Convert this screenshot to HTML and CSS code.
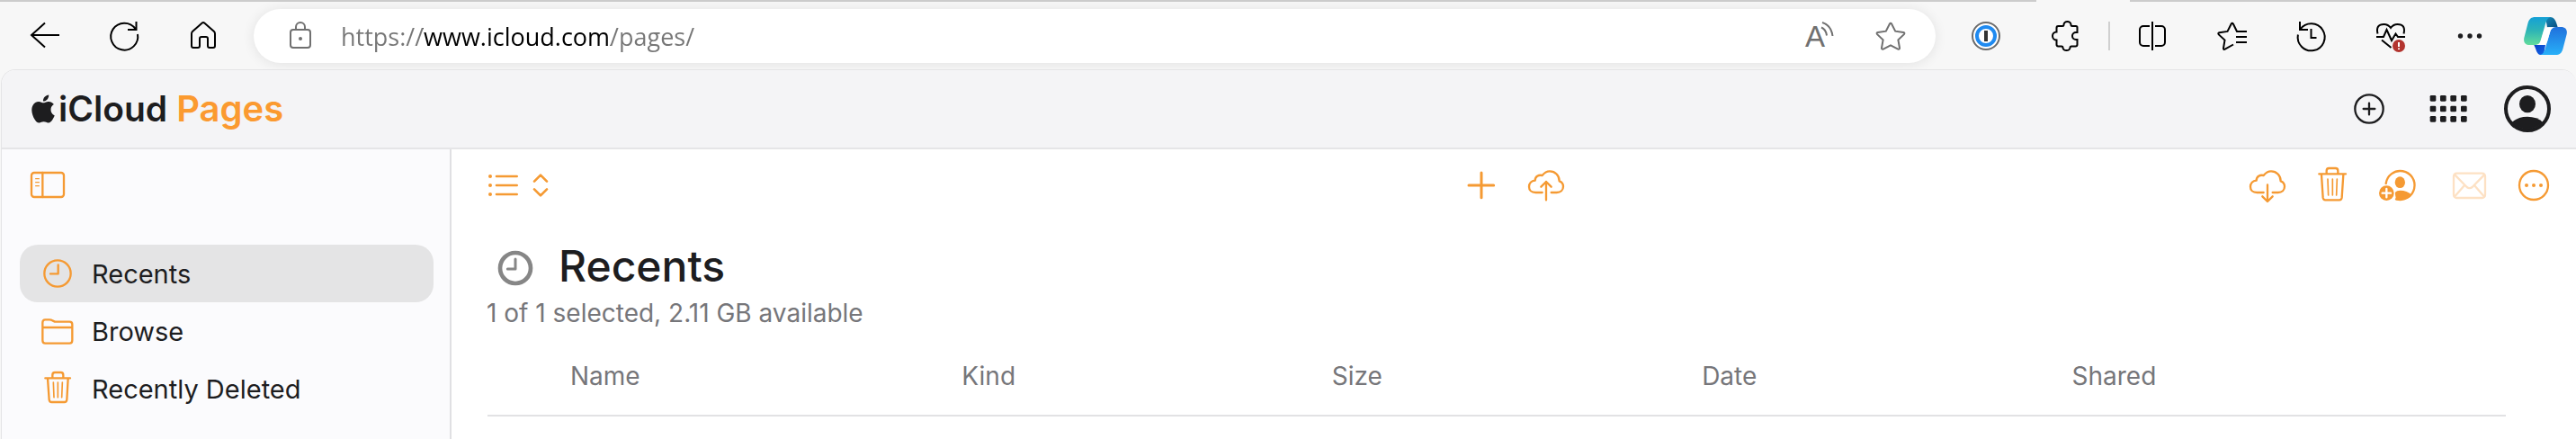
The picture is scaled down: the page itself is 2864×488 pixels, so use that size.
FILE: index.html
```html
<!DOCTYPE html>
<html lang="en">
<head>
<meta charset="utf-8">
<title>iCloud Pages</title>
<link rel="stylesheet" href="styles.css">
</head>
<body>
<div class="tab-edge"><span class="tab-edge-left"></span><span class="tab-edge-right"></span></div>
<header class="browser-bar">
  <button class="tool" aria-label="Back"><svg class="icon" viewBox="0 0 48 48"><path d="M40 23H9M24 9.500 9 23l15 13.500"/></svg></button>
  <button class="tool" aria-label="Reload"><svg class="icon" viewBox="0 0 48 48"><path d="M39 22A15 15 0 1 1 36.500 16M37.500 8v9H28"/></svg></button>
  <button class="tool" aria-label="Home"><svg class="icon" viewBox="0 0 48 48"><path d="M11 21.500q0-1.500 1-2.500L22.500 9.700q1.500-1.300 3 0L36 19q1 1 1 2.500V35a2 2 0 0 1-2 2h-4a2 2 0 0 1-2-2v-8a2 2 0 0 0-2-2h-5a2 2 0 0 0-2 2v8a2 2 0 0 1-2 2h-5a2 2 0 0 1-2-2z"/></svg></button>
  <div class="address">
    <button class="address-button" aria-label="Site information"><svg class="icon muted" viewBox="0 0 48 48"><rect x="13" y="17" width="22" height="20" rx="3"/><path d="M19 17v-3a5 5 0 0 1 10 0v3"/><circle class="solid" cx="24" cy="27" r="2"/></svg></button>
    <input class="url" type="text" aria-label="Address" value="https://www.icloud.com/pages/">
    <button class="address-button" aria-label="Read aloud"><svg class="icon muted" viewBox="0 0 48 48"><text class="aloud" x="8" y="36">A</text><path d="M27 9q10 3 11.500 15M26 14.500q5 2 6 9"/></svg></button>
    <button class="address-button star" aria-label="Add to favorites"><svg class="icon muted" viewBox="0 0 48 48"><path d="M22.800 10.700q1.200-2 2.400 0l4 8 9 1.300q2 .5.700 2.200l-6.500 6.200 1.600 8.800q.1 2-1.800 1.400L24 34.300l-8.200 4.300q-1.900.6-1.800-1.400l1.600-8.800-6.500-6.200q-1.300-1.700.7-2.200l9-1.300z"/></svg></button>
  </div>
  <button class="tool" aria-label="Password manager"><svg class="icon" viewBox="0 0 48 48"><circle cx="24" cy="24" r="15" fill="#fff" stroke="#6b6b6b"/><circle cx="24" cy="24" r="10" stroke="#1f8af0" stroke-width="4"/><path d="M24 18v12" stroke="#333" stroke-width="4"/></svg></button>
  <button class="tool" aria-label="Extensions"><svg class="icon" viewBox="0 0 48 48"><path d="M14.500 19.500V15a2 2 0 0 1 2-2h4.500q1.500 0 1.500-1.500a4 3.500 0 0 1 8 0q0 1.500 1.500 1.500h4a1.500 1.500 0 0 1 1.500 1.500V20H36a4 4 0 0 0 0 8h1.500v5.500a2 2 0 0 1-2 2H31q-1.500 0-1.500 1.500a4 3 0 0 1-8 0q0-1.500-1.500-1.500h-3.500a2 2 0 0 1-2-2v-5a4.500 4.500 0 0 1 0-9z"/></svg></button>
  <span class="divider"></span>
  <button class="tool" aria-label="Split screen"><svg class="icon" viewBox="0 0 48 48"><path d="M21 13h-7a4 4 0 0 0-4 4v14a4 4 0 0 0 4 4h7M27 13h7a4 4 0 0 1 4 4v14a4 4 0 0 1-4 4h-7M24 8v32"/></svg></button>
  <button class="tool" aria-label="Favorites"><svg class="icon" viewBox="0 0 48 48"><path d="M41 19H30l-4-8.300q-1.200-2-2.400 0l-4.100 8.200-9 1.300q-2 .5-.7 2.200l6.700 6.200-1.500 8.900q-.1 2 1.800 1.200L26 33.500M29 25h12M29 31h12"/></svg></button>
  <button class="tool" aria-label="History"><svg class="icon" viewBox="0 0 48 48"><path d="M9.900 22.500A15 15 0 1 0 12.500 16.500M12 8v9h9M24.500 16v10h6"/></svg></button>
  <button class="tool" aria-label="Browser essentials"><svg class="icon" viewBox="0 0 48 48"><path d="M10.500 21.500Q8 11 17.500 11q4.500 0 7.500 4 3-4 7.500-4Q42 11 39.500 21.500M9 25h8l3.500-8L26 29l4.500-7.500L33 25h8M15 28.500 25.500 37"/><circle cx="34" cy="35" r="7" fill="#b3342f" stroke="none"/><path d="M34 31v5M34 37.500v1.500" stroke="#fff"/></svg></button>
  <button class="tool" aria-label="Settings and more"><svg class="icon" viewBox="0 0 48 48"><g class="solid"><circle cx="14.500" cy="24" r="2.700"/><circle cx="25" cy="24" r="2.700"/><circle cx="35.500" cy="24" r="2.700"/></g></svg></button>
  <button class="tool copilot" aria-label="Copilot"><svg width="48" height="42" viewBox="1218 57 144 126">
    <defs>
      <linearGradient id="cp-a" x1="0" y1="0" x2="0" y2="1"><stop offset="0" stop-color="#14a0d6"/><stop offset=".5" stop-color="#2fb5b5"/><stop offset="1" stop-color="#62dc9c"/></linearGradient>
      <linearGradient id="cp-b" x1="0" y1="0" x2="0" y2="1"><stop offset="0" stop-color="#2070dc"/><stop offset="1" stop-color="#28b0f8"/></linearGradient>
      <linearGradient id="cp-c" x1="0" y1="0" x2="1" y2="1"><stop offset="0" stop-color="#1389b8"/><stop offset="1" stop-color="#0b4f80"/></linearGradient>
      <linearGradient id="cp-d" x1="0" y1="0" x2="1" y2="1"><stop offset="0" stop-color="#0a3fc4"/><stop offset="1" stop-color="#1268e8"/></linearGradient>
    </defs>
    <path fill="url(#cp-c)" d="M1290 57h16c14 0 19 12 25 34h-35z"/>
    <path fill="url(#cp-d)" d="M1252 150h38l-6 33h-10c-13 0-14-18-22-33z"/>
    <path fill="url(#cp-a)" d="M1256 57h52c-13 3-16 16-20 30l-14 48c-3 10-8 15-18 15h-18c-15 0-22-9-19-24l13-50c4-13 11-19 24-19z"/>
    <path fill="url(#cp-b)" d="M1324 183h-52c13-3 16-16 20-30l14-48c3-10 8-15 18-15h18c15 0 22 9 19 24l-13 50c-4 13-11 19-24 19z"/>
    <path fill="#fff" d="M1302 91h24c-11 0-17 5-20 14l-9 31c-3 10-8 14-17 14h-24c11 0 16-5 19-15l8-28c3-11 9-16 19-16z"/>
  </svg></button>
</header>

<div class="page">
  <header class="app-header">
    <a class="brand" href="#"><svg class="apple" viewBox="2 0 20 24"><path d="M12.152 6.896c-.948 0-2.415-1.078-3.960-1.040-2.040.027-3.910 1.183-4.961 3.014-2.117 3.675-.546 9.103 1.519 12.090 1.013 1.454 2.208 3.090 3.792 3.039 1.520-.065 2.090-.987 3.935-.987 1.831 0 2.350.987 3.960.948 1.637-.026 2.676-1.480 3.676-2.948 1.156-1.688 1.636-3.325 1.662-3.415-.039-.013-3.182-1.221-3.220-4.857-.026-3.040 2.480-4.494 2.597-4.559-1.429-2.090-3.623-2.324-4.390-2.376-2-.156-3.675 1.090-4.610 1.090zM15.530 3.830c.843-1.012 1.400-2.427 1.245-3.830-1.207.052-2.662.805-3.532 1.818-.780.896-1.454 2.338-1.273 3.714 1.338.104 2.715-.688 3.559-1.701"/></svg><span class="brand-name">iCloud</span><span class="brand-app">Pages</span></a>
    <nav class="account">
      <button class="tool" aria-label="Create"><svg class="icon line dark" viewBox="630 291 144 144"><circle cx="702" cy="363" r="47"/><path d="M702 344v38M683 363h38"/></svg></button>
      <button class="tool" aria-label="Apps"><svg class="icon" viewBox="894 291 144 144"><g fill="#1d1d1f" stroke="none"><rect x="905" y="318" width="20" height="20" rx="4"/><rect x="939" y="318" width="20" height="20" rx="4"/><rect x="973" y="318" width="20" height="20" rx="4"/><rect x="1008" y="318" width="20" height="20" rx="4"/><rect x="905" y="353" width="20" height="20" rx="4"/><rect x="939" y="353" width="20" height="20" rx="4"/><rect x="973" y="353" width="20" height="20" rx="4"/><rect x="1008" y="353" width="20" height="20" rx="4"/><rect x="905" y="387" width="20" height="20" rx="4"/><rect x="939" y="387" width="20" height="20" rx="4"/><rect x="973" y="387" width="20" height="20" rx="4"/><rect x="1008" y="387" width="20" height="20" rx="4"/></g></svg></button>
      <button class="tool" aria-label="Account"><svg class="avatar" viewBox="1146 279 168 168"><circle cx="1230" cy="363" r="72" fill="none" stroke="#1d1d1f" stroke-width="12"/><ellipse cx="1230" cy="347" rx="27" ry="29"/><path d="M1178 408q20-19 52-19t52 19a72 72 0 0 1-104 0z"/></svg></button>
    </nav>
  </header>

  <div class="workspace">
    <aside class="sidebar">
      <div class="sidebar-top"><button class="plain" aria-label="Toggle sidebar"><svg class="icon line" viewBox="87 546 144 144"><rect x="105" y="576" width="108" height="81" rx="9"/><path d="M142 576v81"/><path d="M119 596h11M119 608h11M119 620h11" stroke-width="4"/></svg></button></div>
      <nav class="places">
        <a class="place current" href="#"><svg class="icon line" viewBox="120 120 144 144"><circle cx="192" cy="192" r="44"/><path d="M194 163v30h-26"/></svg>Recents</a>
        <a class="place" href="#"><svg class="icon line" viewBox="120 312 144 144"><path d="M142 356q0-10 9-10h14q6 0 10 3l8 4h49q9 0 9 9v53q0 10-9 10h-81q-9 0-9-10zM142 372h99"/></svg>Browse</a>
        <a class="place" href="#"><svg class="icon line" viewBox="120 504 144 144"><path d="M151 541h83M175 539v-8q0-9 8-9h20q8 0 8 9v8M159 542l5 71q1 8 8 8h43q7 0 8-8l4-71"/><path d="M178 555l2 50M193 555v50M208 555l-2 50" stroke-width="5"/></svg>Recently Deleted</a>
      </nav>
    </aside>

    <main class="main">
      <div class="toolbar">
        <div class="group start"><button class="plain" aria-label="View options"><svg class="icon line wide" viewBox="66 546 216 144"><g class="solid"><circle cx="75" cy="588" r="6"/><circle cx="75" cy="618" r="6"/><circle cx="75" cy="648" r="6"/></g><path d="M96 588h68M96 618h68M96 648h68M222 605l21-21 21 21M222 631l21 21 21-21" stroke-width="8"/></svg></button></div>
        <div class="group">
          <button class="action" aria-label="New document"><svg class="icon line" viewBox="186 126 144 144"><path d="M258 156v83M216 198h83" stroke-width="9"/></svg></button>
          <button class="action" aria-label="Upload"><svg class="icon line" viewBox="291 546 144 144"><path d="M350 642h-22c-14 0-22-8-22-19s8-20 20-21c0-13 12-20 24-17 7-9 15-14 25-14 18 0 32 14 32 33 9 3 13 9 13 18 0 12-9 20-22 20h-18M363 667v-61M346 623l17-17 17 17"/></svg></button>
        </div>
        <div class="group end">
          <button class="action" aria-label="Download"><svg class="icon line" viewBox="291 546 144 144"><path d="M350 642h-22c-14 0-22-8-22-19s8-20 20-21c0-13 12-20 24-17 7-9 15-14 25-14 18 0 32 14 32 33 9 3 13 9 13 18 0 12-9 20-22 20h-18M363 616v56M346 655l17 17 17-17"/></svg></button>
          <button class="action" aria-label="Delete"><svg class="icon line" viewBox="507 546 144 144"><path d="M535 580h89M560 578v-8q0-9 8-9h22q8 0 8 9v8M543 582l5 77q1 8 8 8h47q7 0 8-8l5-77"/><path d="M564 597l2 54M580 597v54M595 597l-2 54" stroke-width="5"/></svg></button>
          <button class="action" aria-label="Collaborate"><svg class="icon line" viewBox="723 546 144 144"><path d="M758 612a48 48 0 1 1 34 52"/><g class="solid"><ellipse cx="805" cy="608" rx="17" ry="19"/><path d="M788 642q6-7 18-7 22 0 38 15-15 17-38 17h-14z"/></g><circle cx="760" cy="644" r="29" fill="#fff" stroke="none"/><circle class="solid" cx="760" cy="644" r="25"/><path d="M760 630v28M746 644h28" stroke="#fff"/></svg></button>
          <button class="action apart" aria-label="Send a copy" disabled><svg class="icon line faded" viewBox="963 546 144 144"><rect x="984" y="578" width="105" height="82" rx="10"/><path d="M988 583l40 41q9 7 18 0l40-41M988 655l32-37M1085 655l-32-37"/></svg></button>
          <button class="action" aria-label="More"><svg class="icon line" viewBox="1179 546 144 144"><circle cx="1251" cy="618" r="48"/><g class="solid"><circle cx="1227" cy="618" r="6"/><circle cx="1251" cy="618" r="6"/><circle cx="1275" cy="618" r="6"/></g></svg></button>
        </div>
      </div>
      <div class="heading">
        <svg class="icon line gray" viewBox="146 100 144 144"><circle cx="218" cy="172" r="51" stroke-width="14"/><path d="M218 142v33h-26" stroke-width="9"/></svg>
        <h1 class="title">Recents</h1>
      </div>
      <p class="summary">1 of 1 selected, 2.11 GB available</p>
      <table class="files">
        <thead><tr><th class="name" scope="col">Name</th><th scope="col">Kind</th><th scope="col">Size</th><th scope="col">Date</th><th class="shared" scope="col">Shared</th></tr></thead>
      </table>
    </main>
  </div>
</div>
</body>
</html>
```

FILE: styles.css
```css
* { box-sizing: border-box; }

body {
  margin: 0;
  min-height: 100vh;
  display: flex;
  flex-direction: column;
  background: #f7f7f7;
  color: #1d1d1f;
  font-family: Inter, "Liberation Sans", sans-serif;
  font-size: 28px;
}

button {
  display: flex;
  align-items: center;
  justify-content: center;
  padding: 0;
  border: 0;
  background: none;
  color: inherit;
}

a { color: inherit; text-decoration: none; }

.icon {
  flex: none;
  width: 48px;
  height: 48px;
  fill: none;
  stroke: #000;
  stroke-width: 2;
}
.icon.muted { stroke: #707070; color: #707070; }
.icon.line {
  stroke: currentColor;
  stroke-width: 7;
  stroke-linecap: round;
  stroke-linejoin: round;
  color: #f59a33;
}
.icon.dark { color: #1d1d1f; }
.icon.gray { color: #868686; }
.icon.faded { color: #fde1c4; }
.icon.wide { width: 72px; }
.icon .solid { fill: currentColor; stroke: none; }
.icon .aloud { font-size: 33px; font-weight: 300; fill: currentColor; stroke: none; }

/* Browser chrome */
.tab-edge { display: flex; justify-content: space-between; height: 2px; }
.tab-edge-left { flex: 1; margin-right: 104px; background: #ccc; }
.tab-edge-right { width: 496px; background: #ccc; }

.browser-bar {
  display: flex;
  align-items: center;
  padding: 8px 0 7px 6px;
}
.tool { flex: none; width: 88px; height: 60px; }
.copilot { width: 75px; padding-left: 7px; }
.divider { flex: none; width: 2px; height: 32px; margin: 0 3px 0 4px; background: #d0d0d0; }

.address {
  flex: 1;
  display: flex;
  align-items: center;
  height: 60px;
  margin: 0 12px;
  padding: 0 26px 0 28px;
  border-radius: 30px;
  background: #fff;
  box-shadow: 0 1px 14px rgba(0, 0, 0, .09);
}
.address-button { flex: none; }
.star { margin-left: 31px; }
.url {
  flex: 1;
  height: 48px;
  margin-left: 21px;
  padding: 0;
  border: 0;
  outline: 0;
  font-family: "Open Sans", "Noto Sans", sans-serif;
  font-size: 27px;
  color: transparent;
  background: linear-gradient(90deg, #767676 91px, #000 91px 300px, #767676 300px);
  -webkit-background-clip: text;
  background-clip: text;
}

/* Web page */
.page {
  flex: 1;
  display: flex;
  flex-direction: column;
  margin-left: 1px;
  border: 1px solid #e4e4e6;
  border-width: 1px 0 0 1px;
  border-radius: 16px 16px 0 0;
  background: #fff;
  overflow: hidden;
}
.app-header {
  display: flex;
  align-items: center;
  justify-content: space-between;
  height: 88px;
  padding: 0 10px 0 33px;
  border-bottom: 2px solid #e5e5e7;
  background: #f4f4f6;
}
.brand { display: flex; align-items: center; font-size: 40px; font-weight: 600; line-height: 48px; }
.apple { width: 26px; height: 32px; fill: #1d1d1f; }
.brand-name { margin-left: 4px; font-size: 39px; }
.brand-app { margin-left: 10px; color: #fb9a30; }
.account { display: flex; }
.avatar { width: 56px; height: 56px; fill: #1d1d1f; }

.workspace { flex: 1; display: flex; }
.sidebar {
  flex: none;
  width: 500px;
  border-right: 2px solid #e0e0e3;
  background: #fbfbfd;
}
.sidebar-top { display: flex; align-items: center; height: 80px; padding-left: 27px; }
.places { padding: 26px 18px 0 20px; }
.place {
  display: flex;
  align-items: center;
  gap: 14px;
  height: 64px;
  padding-left: 18px;
  border-radius: 20px;
  font-size: 29px;
}
.current { background: #e4e4e5; }

.main { flex: 1; min-width: 0; }
.toolbar {
  display: grid;
  grid-template-columns: 1fr auto 1fr;
  height: 80px;
  padding: 0 11px;
}
.group { display: flex; align-items: center; }
.start { padding-left: 29px; }
.end { justify-content: flex-end; }
.action { width: 72px; height: 48px; }
.apart { margin-left: 8px; }

.heading {
  display: flex;
  align-items: center;
  gap: 24px;
  height: 60px;
  margin-top: 22px;
  padding-left: 47px;
}
.title { margin: 0; font-size: 48px; font-weight: 500; line-height: 56px; padding-bottom: 4px; }
.summary { margin: 2px 0 8px; padding-left: 39px; line-height: 36px; color: #76767a; }

.files {
  width: calc(100% - 118px);
  margin-left: 40px;
  border-collapse: collapse;
  table-layout: fixed;
}
.files th {
  height: 88px;
  padding: 0;
  border-bottom: 2px solid #e2e2e4;
  text-align: left;
  font-weight: 400;
  color: #76767a;
}
.files .name { width: 23.5%; padding-left: 92px; }
.files .shared { width: 21.5%; }
```
